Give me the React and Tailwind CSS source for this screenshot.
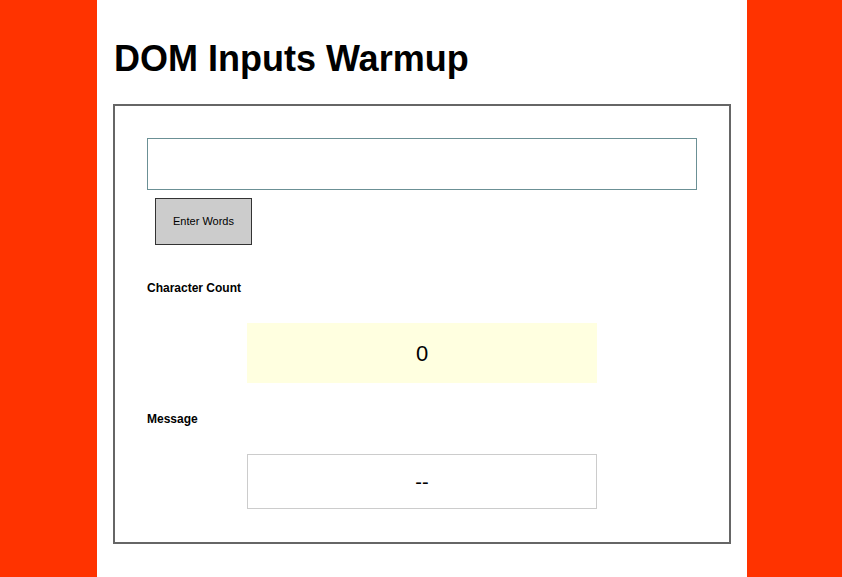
export default function App() {
  return (
    <div className="min-h-[577px] bg-[#ff3300] font-['Liberation_Sans',Arial,sans-serif] text-black">
      <div className="ml-[97px] w-[650px] min-h-[577px] bg-white px-4 pt-[38px] pb-4">
        <h1 className="text-[36px] font-bold leading-[42px] m-0 pl-[1px]">DOM Inputs Warmup</h1>
        <div className="mt-[24px] border-2 border-[#666666] p-8 pb-[33px]">
          <input
            type="text"
            className="block w-full h-[52px] border border-[#6b9095] bg-white outline-none px-2"
          />
          <button className="mt-2 ml-2 w-[97px] h-[47px] border border-[#333333] bg-[#cccccc] text-[11px] text-black">
            Enter Words
          </button>
          <div className="mt-[36px] text-[12px] font-bold leading-[14px]">Character Count</div>
          <div className="mt-[28px] mx-auto w-[350px] h-[60px] bg-[#ffffe0] flex items-center justify-center text-[22px]">
            0
          </div>
          <div className="mt-[29px] text-[12px] font-bold leading-[14px]">Message</div>
          <div className="mt-[28px] mx-auto w-[350px] h-[55px] border border-[#cccccc] flex items-center justify-center text-[20px]">
            --
          </div>
        </div>
      </div>
    </div>
  );
}
